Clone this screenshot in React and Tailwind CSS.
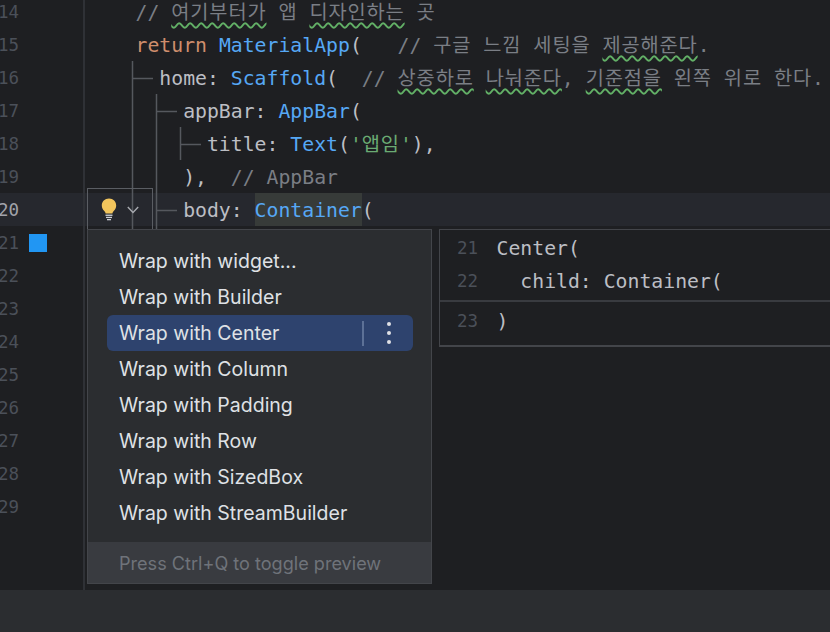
import React from 'react';

const Ko = ({ children }) => <span className="tracking-[0.85px]">{children}</span>;
const Cm = ({ children }) => <span className="text-[#7a7e85]">{children}</span>;
const Wavy = ({ children }) => (
  <span className="tracking-[0.85px] underline decoration-wavy decoration-[#62b066] decoration-[1.5px] underline-offset-[3px]">{children}</span>
);
const Kw = ({ children }) => <span className="text-[#cf8e6d]">{children}</span>;
const Fn = ({ children }) => <span className="text-[#56a8f5]">{children}</span>;

const lines = [
  { n: 14, code: <Cm>{'// '}<Wavy>여기부터가</Wavy>{' '}<Ko>앱</Ko>{' '}<Wavy>디자인하는</Wavy>{' '}<Ko>곳</Ko></Cm> },
  { n: 15, code: <><Kw>return</Kw>{' '}<Fn>MaterialApp</Fn>{'(   '}<Cm>{'// '}<Ko>구글</Ko>{' '}<Ko>느낌</Ko>{' '}<Ko>세팅을</Ko>{' '}<Wavy>제공해준다</Wavy>.</Cm></> },
  { n: 16, code: <>{'  home: '}<Fn>Scaffold</Fn>{'(  '}<Cm>{'// '}<Wavy>상중하로</Wavy>{' '}<Wavy>나눠준다</Wavy>{', '}<Wavy>기준점을</Wavy>{' '}<Ko>왼쪽</Ko>{' '}<Ko>위로</Ko>{' '}<Ko>한다</Ko>.</Cm></> },
  { n: 17, code: <>{'    appBar: '}<Fn>AppBar</Fn>(</> },
  { n: 18, code: <>{'      title: '}<Fn>Text</Fn>(<span className="text-[#6aab73]">'<Ko>앱임</Ko>'</span>),</> },
  { n: 19, code: <>{'    ),  '}<Cm>// AppBar</Cm></> },
  { n: 20, current: true, code: <>{'    body: '}<span className="bg-[#373b39] inline-block h-[33px] text-[#56a8f5]">Container</span>(</> },
  { n: 21, mark: true },
  { n: 22 }, { n: 23 }, { n: 24 }, { n: 25 }, { n: 26 }, { n: 27 }, { n: 28 }, { n: 29 },
];

const actions = ['Wrap with widget...', 'Wrap with Builder', 'Wrap with Center', 'Wrap with Column', 'Wrap with Padding', 'Wrap with Row', 'Wrap with SizedBox', 'Wrap with StreamBuilder'];

const preview = [
  { n: 21, code: 'Center(' },
  { n: 22, code: '  child: Container(' },
  { n: 23, code: ')', sep: true },
];

const mono = 'font-["DejaVu_Sans_Mono","Noto_Sans_CJK_KR",monospace] text-[19.8px]';

const Bulb = () => (
  <svg width="16" height="23" viewBox="0 0 16 23">
    <path d="M8 0.5C3.8 0.5 0.8 3.5 0.8 7.4c0 2.6 1.2 4.2 2.5 5.6.8.9 1.2 1.6 1.3 2.5h6.8c.1-.9.5-1.6 1.3-2.5 1.3-1.4 2.5-3 2.5-5.6C15.200 3.500 12.200 0.500 8 0.500z" fill="#f2c55c" />
    <rect x="4.500" y="16.600" width="7" height="1.300" fill="#ced0d6" />
    <rect x="5" y="18.800" width="6" height="1.300" fill="#ced0d6" />
    <rect x="6" y="21" width="4" height="1.300" fill="#ced0d6" />
  </svg>
);

const Guides = () => (
  <svg className="absolute left-0 top-0 pointer-events-none" width="240" height="232" fill="none">
    <path d="M132.500 61V229M132 78.500H153" stroke="#55585e" strokeWidth="1.500" />
    <path d="M156.500 94V229M156 111.500H177M156 210.500H177" stroke="#55585e" strokeWidth="1.500" />
    <path d="M180.500 127V160M180 144.500H201" stroke="#55585e" strokeWidth="1.500" />
  </svg>
);

export default function App() {
  return (
    <div className="relative w-[830px] h-[632px] overflow-hidden flex flex-col bg-[#2b2d30]">
      {/* Editor */}
      <div className="h-[590px] shrink-0 bg-[#1e1f22] overflow-hidden">
        <div className={`-mt-[5px] ${mono}`}>
          {lines.map((l) => (
            <div key={l.n} className={`flex h-[33px] leading-[33px] ${l.current ? 'bg-[#26282e]' : ''}`}>
              <div className="w-[19px] shrink-0 overflow-hidden flex justify-end">
                <span className={`text-[17.500px] leading-[35px] ${l.current ? 'text-[#a1a3ab]' : 'text-[#4b5059]'}`}>{l.n}</span>
              </div>
              <div className="w-[65px] shrink-0 flex items-center pl-[10px]">
                {l.mark && <div className="w-[18px] h-[18px] bg-[#2196f3]" />}
              </div>
              <div className="flex-1 whitespace-pre pl-[51.500px] leading-[35px] text-[#bcbec4]">{l.code}</div>
            </div>
          ))}
        </div>
      </div>

      {/* Gutter divider */}
      <div className="absolute left-[83px] top-0 w-[2px] h-[590px] bg-[#2f3136]" />
      <Guides />

      {/* Intention bulb */}
      <div className="absolute left-[87px] top-[188px] w-[66px] h-[42px] border border-[#5a5d63] flex items-center pl-[13px] gap-[10px]">
        <Bulb />
        <svg width="12" height="8" viewBox="0 0 12 8" fill="none" className="mt-[1px]">
          <path d="M0.800 1L6 6.400 11.200 1" stroke="#a8abb0" strokeWidth="1.400" />
        </svg>
      </div>

      {/* Intention popup */}
      <div className="absolute left-[87px] top-[229px] w-[345px] h-[355px] bg-[#2b2d30] border border-[#43454a] flex flex-col font-['Inter',sans-serif] text-[19.500px]">
        <div className="flex-1 pt-[13px] pl-[19px] pr-[18px]">
          {actions.map((a) => {
            const selected = a === 'Wrap with Center';
            return (
              <div key={a} className={`h-[36px] flex items-center pl-[12px] rounded-[6px] text-[#dfe1e5] ${selected ? 'bg-[#2e436e]' : ''}`}>
                <span className="flex-1 pt-[1px]">{a}</span>
                {selected && (
                  <>
                    <div className="w-[2px] h-[25px] bg-[#5d7196]" />
                    <div className="w-[49px] flex flex-col items-center gap-[5px]">
                      <span className="w-[4px] h-[4px] rounded-full bg-[#dfe1e5]" />
                      <span className="w-[4px] h-[4px] rounded-full bg-[#dfe1e5]" />
                      <span className="w-[4px] h-[4px] rounded-full bg-[#dfe1e5]" />
                    </div>
                  </>
                )}
              </div>
            );
          })}
        </div>
        <div className="h-[41px] bg-[#393b40] flex items-center pl-[31px] pt-[3px] text-[#6f737a] text-[18.100px]">Press Ctrl+Q to toggle preview</div>
      </div>

      {/* Preview */}
      <div className={`absolute left-[439px] top-[229px] w-[400px] h-[118px] bg-[#1e1f22] border border-[#43454a] border-b-2 pt-[2px] ${mono}`}>
        {preview.map((p) => (
          <div key={p.n} className={`flex h-[33px] leading-[33px] ${p.sep ? 'border-t-2 border-[#393b40] mt-[2px] pt-[3px] h-[38px]' : ''}`}>
            <span className="w-[56.500px] pl-[17px] text-[17.500px] text-[#4b5059]">{p.n}</span>
            <span className="whitespace-pre text-[#bcbec4]">{p.code}</span>
          </div>
        ))}
      </div>
    </div>
  );
}
